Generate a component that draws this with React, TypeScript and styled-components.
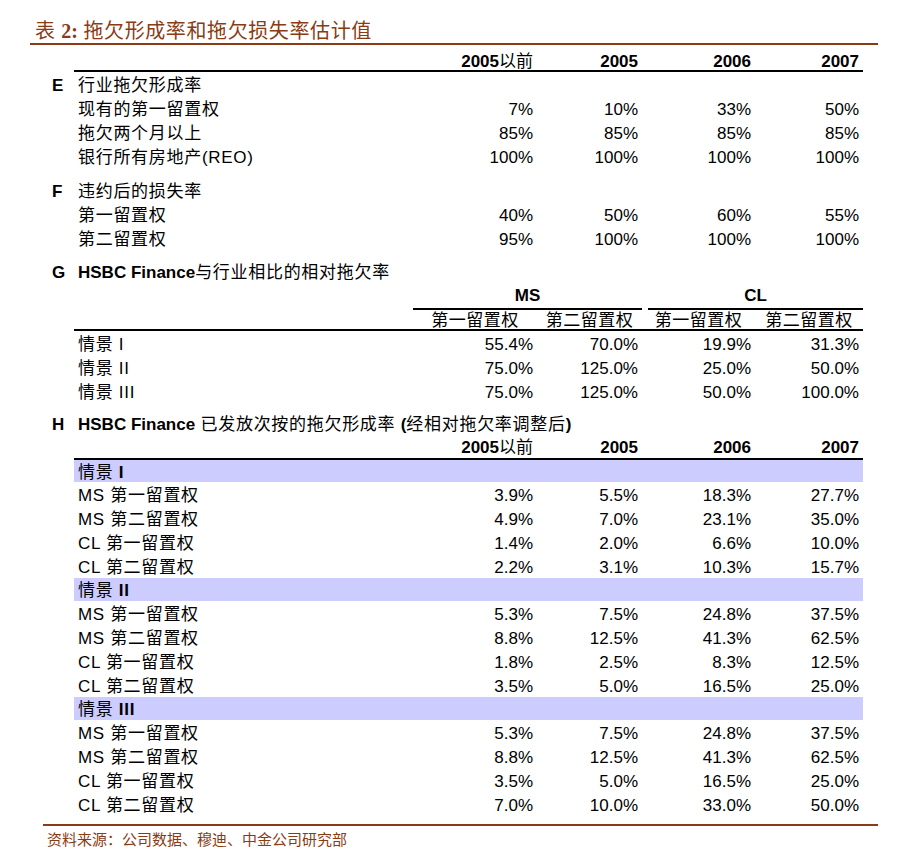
import React from 'react';
import styled, { createGlobalStyle } from 'styled-components';

const BROWN = '#8a3b14';
const SANS = "'Liberation Sans', 'Noto Sans CJK SC', sans-serif";
const SERIF = "'Liberation Serif', 'Noto Sans CJK SC', serif";

const GlobalStyle = createGlobalStyle`
  body {
    margin: 0;
    background: #fff;
    color: #000;
    font-family: ${SANS};
  }
`;

const Page = styled.div`
  width: 848px;
  margin-left: 30px;
  padding-top: 19px;
`;

const Title = styled.h1`
  margin: 0;
  height: 24px;
  padding-left: 5px;
  border-bottom: 2px solid ${BROWN};
  font-family: ${SERIF};
  font-size: 20px;
  font-weight: 400;
  line-height: 24px;
  letter-spacing: 0.6px;
  color: ${BROWN};

  b {
    font-weight: 700;
    letter-spacing: 0;
  }
`;

const Table = styled.div`
  margin-top: 3px;
  width: 833px;
  font-size: 17px;
`;

// height is the full row, line-height is a little taller so glyphs sit where the source has them
const Row = styled.div<{ $h?: number; $lh?: number }>`
  display: flex;
  height: ${({ $h }) => $h ?? 24}px;
  line-height: ${({ $h, $lh }) => $lh ?? ($h ?? 24) + 3}px;
`;

const Letter = styled.div`
  width: 44px;
  padding-left: 22px;
  box-sizing: border-box;
  font-weight: 700;
`;

const Body = styled.div<{ $rule?: boolean; $band?: boolean }>`
  flex: 1;
  display: grid;
  grid-template-columns: 339px 124px 105px 113px 108px;
  border-bottom: ${({ $rule }) => ($rule ? '2px solid #000' : 'none')};
  background: ${({ $band }) => ($band ? '#ccccff' : 'transparent')};
`;

const Label = styled.div`
  padding-left: 4px;
  white-space: nowrap;
  letter-spacing: 0.7px;
`;

const Heading = styled.div`
  padding-left: 4px;
  white-space: nowrap;
  letter-spacing: 0.7px;

  b {
    font-weight: 700;
    letter-spacing: 0;
  }
`;

const Cell = styled.div<{ $bold?: boolean; $center?: boolean }>`
  text-align: ${({ $center }) => ($center ? 'center' : 'right')};
  padding-right: ${({ $center }) => ($center ? 0 : 4)}px;
  font-weight: ${({ $bold }) => ($bold ? 700 : 400)};
  letter-spacing: ${({ $center }) => ($center ? '0.5px' : '0')};
  white-space: nowrap;

  span {
    font-weight: 400;
  }
`;

const Group = styled.div<{ $from: number; $gap?: number }>`
  grid-column: ${({ $from }) => `${$from} / span 2`};
  margin-left: ${({ $gap }) => $gap ?? 0}px;
  border-bottom: 2px solid #000;
  text-align: center;
  font-weight: 700;
`;

const Spacer = styled.div<{ $h: number }>`
  height: ${({ $h }) => $h}px;
`;

const Footer = styled.div`
  margin: 8px 0 0 13px;
  padding: 4px 0 0 4px;
  border-top: 2px solid ${BROWN};
  font-family: ${SERIF};
  font-size: 15px;
  line-height: 20px;
  color: ${BROWN};
`;

type DataRow = [string, string, string, string, string];

function YearHeader({ h, lh }: { h: number; lh: number }) {
  return (
    <Row $h={h} $lh={lh}>
      <Letter />
      <Body $rule>
        <Label />
        <Cell $bold>
          2005<span>以前</span>
        </Cell>
        <Cell $bold>2005</Cell>
        <Cell $bold>2006</Cell>
        <Cell $bold>2007</Cell>
      </Body>
    </Row>
  );
}

function Values({ rows }: { rows: DataRow[] }) {
  return (
    <>
      {rows.map((r) => (
        <Row key={r[0]}>
          <Letter />
          <Body>
            <Label>{r[0]}</Label>
            <Cell>{r[1]}</Cell>
            <Cell>{r[2]}</Cell>
            <Cell>{r[3]}</Cell>
            <Cell>{r[4]}</Cell>
          </Body>
        </Row>
      ))}
    </>
  );
}

function SectionTitle({ letter, children }: { letter: string; children: React.ReactNode }) {
  return (
    <Row>
      <Letter>{letter}</Letter>
      <Heading>{children}</Heading>
    </Row>
  );
}

function Band({ num, h }: { num: string; h: number }) {
  return (
    <Row $h={h}>
      <Letter />
      <Body $band>
        <Label>
          情景 <b>{num}</b>
        </Label>
      </Body>
    </Row>
  );
}

const scenarios: { num: string; band: number; rows: DataRow[] }[] = [
  {
    num: 'I',
    band: 22,
    rows: [
      ['MS 第一留置权', '3.9%', '5.5%', '18.3%', '27.7%'],
      ['MS 第二留置权', '4.9%', '7.0%', '23.1%', '35.0%'],
      ['CL 第一留置权', '1.4%', '2.0%', '6.6%', '10.0%'],
      ['CL 第二留置权', '2.2%', '3.1%', '10.3%', '15.7%'],
    ],
  },
  {
    num: 'II',
    band: 23,
    rows: [
      ['MS 第一留置权', '5.3%', '7.5%', '24.8%', '37.5%'],
      ['MS 第二留置权', '8.8%', '12.5%', '41.3%', '62.5%'],
      ['CL 第一留置权', '1.8%', '2.5%', '8.3%', '12.5%'],
      ['CL 第二留置权', '3.5%', '5.0%', '16.5%', '25.0%'],
    ],
  },
  {
    num: 'III',
    band: 23,
    rows: [
      ['MS 第一留置权', '5.3%', '7.5%', '24.8%', '37.5%'],
      ['MS 第二留置权', '8.8%', '12.5%', '41.3%', '62.5%'],
      ['CL 第一留置权', '3.5%', '5.0%', '16.5%', '25.0%'],
      ['CL 第二留置权', '7.0%', '10.0%', '33.0%', '50.0%'],
    ],
  },
];

export default function App() {
  return (
    <>
      <GlobalStyle />
      <Page>
        <Title>
          表 <b>2:</b> 拖欠形成率和拖欠损失率估计值
        </Title>
        <Table>
          <YearHeader h={24} lh={27} />
          <SectionTitle letter="E">行业拖欠形成率</SectionTitle>
          <Values
            rows={[
              ['现有的第一留置权', '7%', '10%', '33%', '50%'],
              ['拖欠两个月以上', '85%', '85%', '85%', '85%'],
              ['银行所有房地产(REO)', '100%', '100%', '100%', '100%'],
            ]}
          />
          <Spacer $h={10} />
          <SectionTitle letter="F">违约后的损失率</SectionTitle>
          <Values
            rows={[
              ['第一留置权', '40%', '50%', '60%', '55%'],
              ['第二留置权', '95%', '100%', '100%', '100%'],
            ]}
          />
          <Spacer $h={9} />
          <SectionTitle letter="G">
            <b>HSBC Finance</b>与行业相比的相对拖欠率
          </SectionTitle>
          <Row $h={24} $lh={25}>
            <Letter />
            <Body>
              <Label />
              <Group $from={2}>MS</Group>
              <Group $from={4} $gap={6}>
                CL
              </Group>
            </Body>
          </Row>
          <Row $h={24} $lh={27}>
            <Letter />
            <Body $rule>
              <Label />
              <Cell $center>第一留置权</Cell>
              <Cell $center>第二留置权</Cell>
              <Cell $center>第一留置权</Cell>
              <Cell $center>第二留置权</Cell>
            </Body>
          </Row>
          <Values
            rows={[
              ['情景 I', '55.4%', '70.0%', '19.9%', '31.3%'],
              ['情景 II', '75.0%', '125.0%', '25.0%', '50.0%'],
              ['情景 III', '75.0%', '125.0%', '50.0%', '100.0%'],
            ]}
          />
          <Spacer $h={8} />
          <SectionTitle letter="H">
            <b>HSBC Finance</b> 已发放次按的拖欠形成率 <b>(</b>经相对拖欠率调整后<b>)</b>
          </SectionTitle>
          <YearHeader h={25} lh={26} />
          {scenarios.map((s) => (
            <React.Fragment key={s.num}>
              <Band num={s.num} h={s.band} />
              <Values rows={s.rows} />
            </React.Fragment>
          ))}
        </Table>
        <Footer>资料来源：公司数据、穆迪、中金公司研究部</Footer>
      </Page>
    </>
  );
}
